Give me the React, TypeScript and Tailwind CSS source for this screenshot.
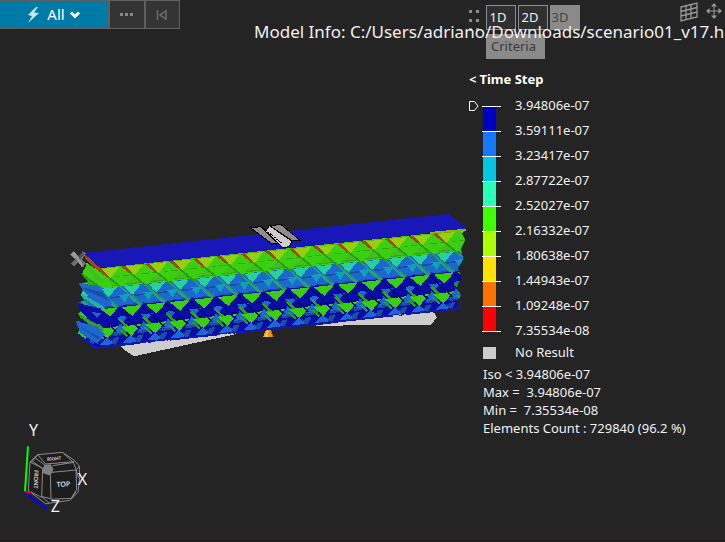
type Band = { value: string; color: string }

const bands: Band[] = [
  { value: "3.94806e-07", color: "bg-[#0000c8]" },
  { value: "3.59111e-07", color: "bg-[#1478ff]" },
  { value: "3.23417e-07", color: "bg-[#00c8e0]" },
  { value: "2.87722e-07", color: "bg-[#28ffb8]" },
  { value: "2.52027e-07", color: "bg-[#3cff00]" },
  { value: "2.16332e-07", color: "bg-[#aaff00]" },
  { value: "1.80638e-07", color: "bg-[#ffe100]" },
  { value: "1.44943e-07", color: "bg-[#ff7200]" },
  { value: "1.09248e-07", color: "bg-[#ff0000]" },
]

const lastValue = "7.35534e-08"

// One lattice column: [fill, points], drawn once per cell
const cellBase: [string, string][] = [
  ["#3ad012", "0,0 73,-8 73,60 0,68"],
  ["#1c68d0", "0,62 73,54 73,122 0,130"],
  ["#0c0ca8", "0,120 73,112 73,236 0,244"],
]

const cellFaces: [string, string][] = [
  ["#95d010", "12,1 70,-5 42,30"],
  ["#7aa808", "12,0 70,-6 70,-4 12,2"],
  ["#40be1c", "42,29 66,50 14,55"],
  ["#34a812", "-12,31 40,26 40,28 -12,33"],
  ["#34a812", "14,53 66,48 62,51 20,57"],
  ["#28d0a0", "12,62 62,56 36,88"],
  ["#10a0b8", "68,80 102,76 84,102"],
  ["#1850a0", "42,86 76,82 66,88 36,93"],
  ["#1850a0", "14,116 78,108 68,113 24,119"],
  ["#36d010", "4,124 66,117 36,150"],
  ["#080880", "44,148 100,136 90,144 50,152"],
  ["#1c68d0", "-10,153 26,149 6,171"],
  ["#080880", "14,174 76,166 68,171 24,178"],
  ["#36d010", "2,183 64,174 34,210"],
  ["#1c68d0", "70,166 94,190 52,196"],
  ["#1850a0", "46,198 92,190 80,198 54,203"],
  ["#1c68d0", "30,208 54,225 34,230 8,231"],
  ["#1850a0", "50,210 70,205 58,230 46,226"],
]

const cellStruts: [string, string][] = [
  ["#a04810", "0,1 14,0 34,20 34,28 24,20"],
  ["#2a9a10", "30,19 40,26 90,66 90,74 66,54 32,26"],
  ["#18888a", "72,48 86,60 142,106 136,108"],
  ["#28a07c", "68,50 76,56 138,110 134,116 108,94"],
  ["#080880", "136,108 206,174 202,176 134,114"],
  ["#2ca40c", "136,146 144,144 166,164 160,170"],
  ["#2ca40c", "140,176 148,176 168,194 162,198"],
  ["#1850a0", "184,196 212,222 206,226"],
]

const leftFlange: [string, string][] = [
  ["#3ad012", "80,188 134,228 160,262 122,266 66,222 75,205"],
  ["#40be1c", "78,196 112,222 134,248 104,238"],
  ["#2a9a10", "66,220 126,262 118,266 70,232"],
  ["#1c68d0", "58,250 116,258 150,296 156,312 120,318 68,272"],
  ["#1850a0", "60,260 124,276 150,304 98,280"],
  ["#28b09c", "62,280 122,314 138,330 110,322 66,290"],
  ["#0c0ca8", "52,308 120,326 152,350 136,378 98,368 62,334"],
  ["#080880", "56,318 128,352 112,348"],
  ["#1c68d0", "96,336 122,340 112,354"],
  ["#2ca40c", "55,340 118,378 134,394 104,384 60,352"],
  ["#1c68d0", "48,364 112,380 134,404 112,432 60,398"],
  ["#1850a0", "56,378 122,412 116,418"],
  ["#1414b8", "52,398 108,440 170,434 168,440 106,446 54,408"],
]

const outline =
  "60,140 1240,60 1206,100 1216,120 1202,148 1210,176 1194,204 1204,234 1190,262 1203,288 1190,306 1197,327 105,444 52,402 62,385 48,365 68,360 55,342 66,330 52,310 74,300 62,285 70,270 58,252 85,246 68,222 75,195 90,170"

const cells = Array.from({ length: 17 }, (_, i) => i)

function Faces({ faces }: { faces: [string, string][] }) {
  return (
    <>
      {faces.map(([fill, points], i) => (
        <polygon key={i} fill={fill} points={points} />
      ))}
    </>
  )
}

function LatticeModel() {
  const place = (i: number) => `translate(${37 + i * 72} ${212.5 - i * 7.5})`
  return (
    <svg viewBox="0 0 1227 510" className="block w-[409px]" shapeRendering="crispEdges" role="img" aria-label="Lattice result">
      <defs>
        <clipPath id="body">
          <polygon points={outline} />
        </clipPath>
      </defs>
      {/* supports under the part */}
      <polygon fill="#cdcdcd" points="183,438 530,398 522,404 390,432 222,469 190,448" />
      <polygon fill="#cdcdcd" points="765,377 1000,345 1092,326 1124,340 1130,352 1113,375" />
      <g clipPath="url(#body)">
        {cells.map((i) => (
          <g key={i} transform={place(i)}>
            <Faces faces={cellBase} />
          </g>
        ))}
        {cells.map((i) => (
          <g key={i} transform={place(i)}>
            <Faces faces={cellFaces} />
          </g>
        ))}
        {cells.map((i) => (
          <g key={i} transform={place(i - 1)}>
            <Faces faces={cellStruts} />
          </g>
        ))}
      </g>
      <Faces faces={leftFlange} />
      <polygon fill="#1414b8" points="105,440 1197,322 1197,328 105,446" />
      <path d="M240 431L330 421M480 404L520 400M1000 347L1040 342" stroke="#cdcdcd" strokeWidth="3" strokeDasharray="24 8 6 5" />
      {/* top plate */}
      <polygon fill="#1818b8" points="78,158 1165,42 1217,82 1217,88 126,204 76,168" />
      <polygon fill="#8cb80c" points="1110,96 1217,86 1217,92 1110,101" />
      <polygon fill="#a04810" points="76,166 86,172 140,222 138,230 110,208 76,178" />
      {/* load arrow */}
      <g stroke="#000" strokeWidth="3">
        <polygon fill="#8f8b8b" points="571,83 604,80 660,130 634,130" />
        <polygon fill="#8f8b8b" points="630,78 662,73 722,122 698,123" />
        <polygon fill="#cdcdcd" points="602,80 618,91 628,77 694,122 692,136 680,142 666,141" />
        <path d="M618 91L666 130" strokeDasharray="5 3" />
      </g>
      {/* constraint markers */}
      <polygon fill="#707070" points="30,163 42,153 55,168 68,154 78,160 66,178 78,190 68,203 54,187 42,199 32,190 46,178" />
      <polygon fill="#9a9a9a" points="32,163 42,155 58,174 70,196 64,200 50,178" />
      <polygon fill="#505050" points="54,170 68,155 72,162 60,178" />
      <polygon fill="#e09a20" points="618,390 632,390 641,410 609,410" />
      <polygon fill="#ffc040" points="620,392 626,392 624,410 614,410" />
      <polygon fill="#a06810" points="632,392 634,392 641,410 636,410" />
    </svg>
  )
}

function ViewCube() {
  return (
    <svg viewBox="0 0 420 366" className="block w-[140px] font-['Noto_Sans',sans-serif]" fill="none">
      <g stroke="#8c8c8c" strokeWidth="3">
        <path
          fill="#1d1d1d"
          d="M90 156L113 134L187 127L222 150L238 168L239 202L234 247L210 271L137 281L85 242Z"
        />
        <path d="M90 156L128 175L125 260L148 279M113 134L137 162L222 155M187 127L220 157L229 179L235 204M158 167L222 157M155 187L228 180L230 238L214 265L153 268L151 192M93 158L113 136M125 260L153 266M85 242L125 262M97 154L130 177M229 180L238 168M214 265L228 245" />
        <path d="M106 144L137 167" />
      </g>
      <path d="M134 164L152 163L160 176L156 190L146 196L130 190L127 176Z" fill="#808080" />
      <path d="M84 109L75 243" stroke="#00ff00" strokeWidth="6" />
      <path d="M76 246H96" stroke="#ff0000" strokeWidth="6" />
      <path d="M78 250L140 297" stroke="#0000ff" strokeWidth="6" />
      <g fill="#f0f0f0">
        <text x="170" y="231" fontSize="21" fontWeight="500" transform="rotate(-3 170 231)">TOP</text>
        <text x="103" y="180" fontSize="17" fontWeight="500" transform="rotate(92 103 180)">FRONT</text>
        <text x="142" y="153" fontSize="14" fontWeight="500" transform="rotate(-6 142 153)">RIGHT</text>
        <text x="87" y="77" fontSize="48">Y</text>
        <text x="233" y="224" fontSize="48">X</text>
        <text x="152" y="305" fontSize="48">Z</text>
      </g>
    </svg>
  )
}

function Toolbar() {
  return (
    <div className="flex h-[29px] w-[180px] border-y border-r border-[#606060] text-[15px]">
      <button className="flex w-[108px] items-center justify-center gap-2 bg-[#007ba7] text-white">
        <svg viewBox="0 0 12 16" className="h-4 w-3" fill="#c4e8f4">
          <path d="M9 0L1 8l4 1-4 7L12 6 7 5.500 11 0z" />
        </svg>
        <span className="flex items-center gap-1">
          All
          <svg viewBox="0 0 12 8" className="h-2 w-3" fill="none" stroke="#fff" strokeWidth="3">
            <path d="M2 1.500L6 5.500l4-4" />
          </svg>
        </span>
      </button>
      <button aria-label="More" className="flex flex-1 items-center justify-center gap-[2px] border-l-2 border-[#606060] bg-[#343434]">
        <span className="size-[3px] bg-[#888]" />
        <span className="size-[3px] bg-[#888]" />
        <span className="size-[3px] bg-[#888]" />
      </button>
      <button aria-label="First" className="flex flex-1 items-center justify-center border-l-2 border-[#606060] bg-[#343434]">
        <svg viewBox="0 0 12 12" className="size-3" fill="none" stroke="#6c6c6c" strokeWidth="1.500">
          <path d="M1.500 1v10M10 2v8L4 6z" />
        </svg>
      </button>
    </div>
  )
}

function FilterBar() {
  return (
    <div className="flex items-start pt-[5px]">
      <div className="mt-[5px] grid w-[17px] grid-cols-[3px_3px] gap-x-1 gap-y-[6px]">
        {[0, 1, 2, 3, 4, 5].map((d) => (
          <span key={d} className="size-[3px] bg-[#8c8c8c]" />
        ))}
      </div>
      <div>
        <div className="flex gap-[2px] text-[13px]">
          <button className="h-[25px] w-[30px] border border-[#8c8c8c] bg-[#303030] pr-[6px] text-[#eee]">1D</button>
          <button className="h-[25px] w-[30px] border border-[#8c8c8c] bg-[#303030] pr-[6px] text-[#eee]">2D</button>
          <button className="h-[25px] w-[30px] bg-[#8a8a8a] pr-[10px] text-[#444]">3D</button>
        </div>
        <button className="mt-1 h-[25px] w-[59px] bg-[#8a8a8a] pr-1 text-[13px] text-[#3c3c3c]">Criteria</button>
      </div>
      <div className="ml-auto flex items-start gap-2 pr-[3px]">
        <button aria-label="Grid" className="-mt-[3px]">
          <svg viewBox="0 0 18 20" className="h-5 w-[18px]" fill="none" stroke="#999" strokeWidth="1.300">
            <path d="M1 5l16-4v14L1 19zM6 4v14M11 3v14M1 9.500l16-4M1 14l16-4" />
          </svg>
        </button>
        <button aria-label="Pan" className="-mt-[2px]">
          <svg viewBox="0 0 16 16" className="size-4" fill="#999" stroke="#999">
            <path d="M8 2v12M2 8h12" />
            <path stroke="none" d="M8 0l3 3.500H5zM8 16l3-3.500H5zM0 8l3.500-3v6zM16 8l-3.500-3v6z" />
          </svg>
        </button>
      </div>
    </div>
  )
}

function Legend() {
  return (
    <section className="pt-[11px] text-[13px] leading-[18px]">
      <h2 className="flex gap-[3px] font-bold text-white">
        <span>&lt;</span>Time Step
      </h2>
      <div className="mt-[17px] flex items-start">
        <svg viewBox="0 0 10 10" className="-mt-1 mr-[3px] size-[10px]" fill="none" stroke="#fff">
          <path d="M.5.5h5L9 5 5.500 9.500h-5z" />
        </svg>
        <div className="mt-[1px] w-[19px] border-b border-white">
          {bands.map((b) => (
            <div key={b.value} className="h-[25px] border-t border-white pl-px">
              <div className={`h-full w-[13px] ${b.color}`} />
            </div>
          ))}
        </div>
        <ul className="-mt-3 ml-[14px]">
          {bands.map((b) => (
            <li key={b.value} className="h-[25px] leading-[25px]">{b.value}</li>
          ))}
          <li className="h-[25px] leading-[25px]">{lastValue}</li>
        </ul>
      </div>
      <div className="flex items-center pl-[14px]">
        <span className="mt-[1px] mr-[19px] h-3 w-[13px] bg-[#cdcdcd]" />
        No Result
      </div>
      <div className="mt-1 pl-[14px] whitespace-pre">
        <p>Iso &lt; 3.94806e-07</p>
        <p>Max =  3.94806e-07</p>
        <p>Min =  7.35534e-08</p>
        <p>Elements Count : 729840 (96.2 %)</p>
      </div>
    </section>
  )
}

export default function App() {
  return (
    <div className="relative flex min-h-screen flex-col overflow-hidden bg-[#242424] font-['Noto_Sans',sans-serif] text-[#f0f0f0]">
      <main className="flex flex-1">
        <div className="min-w-0 flex-1">
          <Toolbar />
          <div className="pt-[171px] pl-[60px]">
            <LatticeModel />
          </div>
          <div className="pt-10">
            <ViewCube />
          </div>
        </div>
        <div className="w-[256px] shrink-0">
          <FilterBar />
          <Legend />
        </div>
      </main>
      <footer className="h-1 border-t border-[#302828] bg-[#202020]" />
      {/* note drawn on top of the viewport */}
      <p className="pointer-events-none absolute top-5 left-[254px] text-[17px] leading-6 whitespace-nowrap">
        Model Info: C:/Users/adriano/Downloads/scenario01_v17.h
      </p>
    </div>
  )
}
